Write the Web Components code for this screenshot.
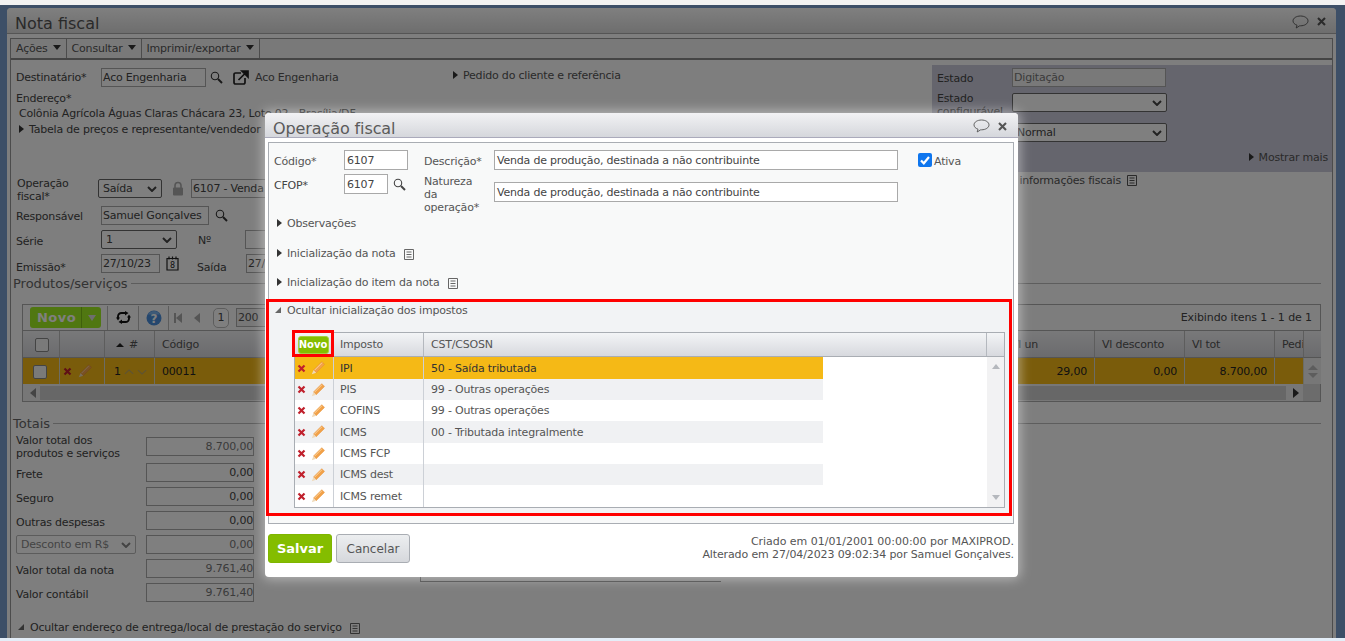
<!DOCTYPE html>
<html lang="pt-BR">
<head>
<meta charset="utf-8">
<title>Nota fiscal</title>
<style>
  html, body { margin: 0; height: 100%; }
  body { width: 1345px; height: 641px; overflow: hidden; background: #fff; font: 11px/13px "DejaVu Sans", Verdana, sans-serif; letter-spacing: -.2px; color: #444; }
</style>
</head>
<body>
<nf-desktop>
  <nf-invoice></nf-invoice>
  <nf-modal slot="modal" heading="Operação fiscal">
    <nf-fiscal-form></nf-fiscal-form>
    <nf-tax-section></nf-tax-section>
    <nf-modal-footer slot="footer"></nf-modal-footer>
  </nf-modal>
</nf-desktop>

<script>
// icons used all over the page
const ICONS = {
  search: `<svg width="13" height="13" viewBox="0 0 13 13"><circle cx="5" cy="5" r="3.7" fill="none" stroke="currentColor" stroke-width="1.1"/><path d="M8 8l4 4" stroke="currentColor" stroke-width="2"/></svg>`,
  external: `<svg width="16" height="15" viewBox="0 0 16 15"><path d="M8 3H2.500A1.500 1.500 0 0 0 1 4.500v8A1.500 1.500 0 0 0 2.500 14h8a1.500 1.500 0 0 0 1.500-1.500V8" fill="none" stroke="currentColor" stroke-width="1.700"/><path d="M5.500 10L13 2.500M9 1h6v6z" fill="currentColor" stroke="currentColor" stroke-width="1.700"/></svg>`,
  lock: `<svg width="12" height="15" viewBox="0 0 12 15"><path d="M3 7V4.500a3 3 0 0 1 6 0V7" fill="none" stroke="currentColor" stroke-width="1.600"/><rect x="1" y="6.500" width="10" height="8" rx="1" fill="currentColor"/></svg>`,
  doc: `<svg width="10" height="11" viewBox="0 0 10 11"><path d="M.5.500h9v10h-9zM2.500 3h5M2.500 5.500h5M2.500 8h5" fill="none" stroke="currentColor"/></svg>`,
  pencil: `<svg width="14" height="14" viewBox="0 0 14 14"><path d="M2.500 9L10.800.7l2.700 2.700-8.300 8.300z" fill="#f2a24a" stroke="#e58a2c" stroke-width=".5"/><path d="M2.500 9l2.700 2.700-4.400 1.600z" fill="#efd9b8"/><path d="M3.500 9.200L11 1.700" stroke="#fbd29c"/></svg>`,
  remove: `<svg width="9" height="9" viewBox="0 0 9 9"><path d="M1.500 1.500l6 6M7.500 1.500l-6 6" stroke="#c0202c" stroke-width="2.200"/></svg>`,
  bubble: `<svg width="17" height="14" viewBox="0 0 17 14"><path d="M8.500 1C4.400 1 1 3.100 1 5.900c0 2 1.700 3.500 4 4.300L4.200 13l3.500-2.200h.8c4.100 0 7.500-2.100 7.500-4.900S12.600 1 8.500 1z" fill="none" stroke="currentColor" stroke-width=".9"/></svg>`,
  close: `<svg width="9" height="9" viewBox="0 0 9 9"><path d="M1 1l7 7M8 1L1 8" stroke="currentColor" stroke-width="2.100"/></svg>`,
  calendar: `<svg width="13" height="15" viewBox="0 0 13 15"><path d="M1 2.500h11v11.500H1z" fill="none" stroke="currentColor" stroke-width="1.200"/><path d="M3 .5v3M6.500 .5v3M10 .5v3" stroke="currentColor" stroke-width="1.200"/><text x="6.500" y="12" font-size="8" text-anchor="middle" fill="currentColor" font-family="DejaVu Sans">8</text></svg>`,
  refresh: `<svg width="15" height="13" viewBox="0 0 15 13"><path d="M2 7V5.500C2 3.500 3.500 2 5.500 2H10M13 6v1.500c0 2-1.500 3.500-3.500 3.500H5" fill="none" stroke="currentColor" stroke-width="1.900"/><path d="M9 0l3.500 2L9 4.500zM6 8.500L2.500 11 6 13zM0 6.500h4L2 9.500zM11 6.500h4L13 3.500z" fill="currentColor"/></svg>`,
  help: `<svg width="16" height="16" viewBox="0 0 16 16"><circle cx="8" cy="8" r="7.500" fill="#4a8fdc"/><path d="M8 1a7 7 0 0 1 6 3.500H2A7 7 0 0 1 8 1z" fill="#7db4ee"/><text x="8" y="12.500" font-size="12" font-weight="700" text-anchor="middle" fill="#fff" font-family="DejaVu Sans">?</text></svg>`,
};

function define(name, html) {
  customElements.define(name, class extends HTMLElement {
    constructor() {
      super();
      this.attachShadow({ mode: "open" }).innerHTML = html;
    }
  });
}

// small bits ---------------------------------------------------------
class NfIcon extends HTMLElement {
  constructor() { super(); this.attachShadow({ mode: "open" }); }
  connectedCallback() {
    this.shadowRoot.innerHTML = `<style>:host{display:inline-flex;flex:none;line-height:0}</style>${ICONS[this.getAttribute("name")] || ""}`;
  }
}
customElements.define("nf-icon", NfIcon);

define("nf-input", `<style>
  :host { display: inline-block; box-sizing: border-box; height: 19px; padding: 1px 1px; border: 1px solid #aaa; background: #fff; color: #444; white-space: nowrap; overflow: hidden; line-height: 15px; flex: none; }
  :host([ro]) { background: #f2f2f2; color: #777; }
  :host([num]) { text-align: right; padding-right: 0; }
</style><slot></slot>`);

define("nf-select", `<style>
  :host { display: inline-flex; align-items: center; box-sizing: border-box; height: 19px; padding: 0 4px; border: 1px solid #666; border-radius: 2px; background: #fff; color: #444; white-space: nowrap; flex: none; }
  :host([off]) { border-color: #b8b8b8; color: #888; }
  svg { flex: none; margin-left: auto; }
</style><slot></slot><svg width="10" height="6" viewBox="0 0 10 6"><path d="M1 1l4 4 4-4" fill="none" stroke="currentColor" stroke-width="2"/></svg>`);

define("nf-expander", `<style>
  :host { display: flex; align-items: center; height: 14px; gap: 5px; white-space: nowrap; color: inherit; }
  i { width: 0; height: 0; border-style: solid; border-width: 4px 0 4px 5px; border-color: transparent transparent transparent #333; flex: none; }
  :host([open]) i { border-width: 0 0 6px 6px; border-color: transparent transparent #666 transparent; margin-right: 1px; }
  ::slotted(nf-icon) { margin-left: 3px; margin-top: 3px; color: #666; }
</style><i></i><slot></slot>`);

define("nf-menu-button", `<style>
  :host { display: flex; align-items: center; gap: 5px; padding: 0 5px; border-right: 1px solid #999; height: 100%; color: #555; white-space: nowrap; }
  i { width: 0; height: 0; border-style: solid; border-width: 5px 4.500px 0; border-color: #333 transparent transparent; margin-top: -2px; }
</style><slot></slot><i></i>`);

define("nf-money-row", `<style>
  :host { display: flex; align-items: flex-start; height: 24px; }
  :host([two]) { height: 26px; }
  .l { width: 130px; flex: none; padding-top: 5px; }
  :host([two]) .l { padding-top: 0; margin-top: -3px; }
  :host([sel]) .l { padding-top: 0; }
  nf-input { width: 108px; height: 19px; }
  ::slotted(nf-select) { width: 120px; margin-right: 10px; }
</style><div class="l"><slot></slot></div><nf-input num><slot name="v"></slot></nf-input>`);

// background form ----------------------------------------------------
define("nf-top-form", `<style>
  :host { display: block; font-size: 11px; }
  .a { display: flex; height: 107px; margin-top: 5px; }
  .left { width: 437px; padding-left: 5px; flex: none; }
  .mid { flex: 1; padding-top: 3px; }
  .state { width: 400px; background: #cbcbdb; padding: 3px 0 0 5px; box-sizing: border-box; flex: none; }
  .row { display: flex; align-items: center; }
  .lbl { width: 85px; flex: none; }
  .state .lbl { width: 75px; }
  .state .row { height: 19px; }
  .state .row + .row { margin-top: 6px; }
  .state .tall .lbl { height: 26px; margin-top: 5px; }
  .more { display: flex; justify-content: flex-end; padding-right: 4px; margin-top: 8px; color: #555; }
  .more2 { margin-left: auto; margin-right: 195px; display: flex; gap: 6px; align-items: center; color: #555; }
  .b { padding: 5px 0 0 5px; }
  .b .row { height: 19px; margin-top: 5px; }
  .b .row.first { margin-top: 0; height: 24px; align-items: flex-start; }
  .muted { color: #555; }
</style>
<div class="a">
  <div class="left">
    <div class="row" style="padding-top:3px">
      <div class="lbl">Destinatário*</div>
      <nf-input style="width:105px">Aco Engenharia</nf-input>
      <nf-icon name="search" style="margin-left:4px;color:#333"></nf-icon>
      <nf-icon name="external" style="margin-left:10px;color:#222"></nf-icon>
      <span class="muted" style="margin-left:6px">Aco Engenharia</span>
    </div>
    <div style="margin-top:5px">Endereço*</div>
    <div style="margin:2px 0 2px 3px;white-space:nowrap">Colônia Agrícola Águas Claras Chácara 23, Lote 02 - Brasília/DF</div>
    <nf-expander style="margin-left:3px">Tabela de preços e representante/vendedor</nf-expander>
  </div>
  <div class="mid"><nf-expander class="muted">Pedido do cliente e referência</nf-expander></div>
  <div class="state">
    <div class="row"><div class="lbl" style="padding-top:2px">Estado</div><nf-input ro style="width:154px">Digitação</nf-input></div>
    <div class="row tall"><div class="lbl">Estado configurável</div><nf-select style="width:155px"></nf-select></div>
    <div class="row" style="margin-top:11px"><div class="lbl">Tipo</div><nf-select style="width:155px">Normal</nf-select></div>
    <div class="more"><nf-expander>Mostrar mais</nf-expander></div>
  </div>
</div>
<div class="b">
  <div class="row first">
    <div style="width:81px;margin-left:1px;padding-top:0;flex:none">Operação<br>fiscal*</div>
    <nf-select style="width:64px;margin-top:2px">Saída</nf-select>
    <nf-icon name="lock" style="margin:4px 0 0 10px;color:#aaa"></nf-icon>
    <nf-input style="width:200px;margin:2px 0 0 7px">6107 - Venda</nf-input>
    <div class="more2" style="margin-top:-3px">informações fiscais <nf-icon name="doc"></nf-icon></div>
  </div>
  <div class="row"><div class="lbl" style="padding-top:2px">Responsável</div><nf-input style="width:108px">Samuel Gonçalves</nf-input><nf-icon name="search" style="margin-left:6px;color:#333"></nf-icon></div>
  <div class="row"><div class="lbl" style="padding-top:4px">Série</div><nf-select style="width:76px">1</nf-select><span style="margin:0 0 0 21px;width:47px;padding-top:2px">Nº</span><nf-input style="width:60px"></nf-input></div>
  <div class="row"><div class="lbl" style="padding-top:7px">Emissão*</div><nf-input style="width:59px">27/10/23</nf-input><nf-icon name="calendar" style="margin-left:6px;color:#222"></nf-icon><span style="margin-left:18px;width:49px;padding-top:7px">Saída</span><nf-input style="width:60px">27/10/23</nf-input></div>
</div>`);

define("nf-legend", `<style>
  :host { display: flex; align-items: center; gap: 3px; font-size: 13px; line-height: 15px; letter-spacing: 0; color: #666; white-space: nowrap; height: 15px; }
  i { flex: 1; height: 1px; background: #bbb; }
</style><slot></slot><i></i>`);

define("nf-products", `<style>
  :host { display: block; box-sizing: border-box; height: 98px; border: 1px solid #aaa; background: #f4f4f4; font-size: 11px; color: #444; }
  .bar { display: flex; align-items: center; box-sizing: border-box; height: 26px; border-bottom: 1px solid #aaa; background: #fafafa; }
  .novo { display: flex; width: 71px; height: 21px; margin: 0 6px 0 7px; background: #a0ee22; border-radius: 3px; color: #fff; font: 700 13px/21px "DejaVu Sans", sans-serif; letter-spacing: .5px; box-sizing: border-box; flex: none; }
  .novo b { flex: 1; text-align: center; padding-left: 2px; }
  .novo span { width: 19px; border-left: 1px solid #7fc016; display: flex; align-items: center; justify-content: center; }
  .novo span::after { content: ""; border-style: solid; border-width: 6px 4px 0; border-color: #ddd transparent transparent; }
  .sep { width: 1px; height: 24px; background: #bbb; flex: none; }
  .stop { width: 2px; height: 10px; background: #aaa; margin-left: 5px; }
  .tri { width: 0; height: 0; border-style: solid; border-width: 5px 6px 5px 0; border-color: transparent #aaa transparent transparent; }
  .pg { box-sizing: border-box; width: 16px; height: 20px; margin-left: 13px; border: 1px solid #bbb; border-radius: 5px; background: #fff; text-align: center; line-height: 18px; flex: none; }
  .info { margin-left: auto; padding-right: 8px; letter-spacing: -.1px; }
  .grid { display: grid; grid-template-columns: 37px 45px 50px 849px 91px 90px 90px 29px 17px; }
  .h, .c { box-sizing: border-box; border-right: 1px solid #bbb; padding: 1px 7px 0; display: flex; align-items: center; white-space: nowrap; overflow: hidden; }
  .h { height: 27px; background: linear-gradient(#f2f2f4, #d6d7db); border-bottom: 1px solid #aaa; color: #555; }
  .c { height: 26px; background: #f5b916; border-right-color: #d8d8c8; color: #222; }
  .n { justify-content: flex-end; }
  .box { width: 14px; height: 14px; border: 1px solid #888; border-radius: 2px; background: #f4f4f4; flex: none; box-sizing: border-box; margin-left: 5px; }
  .c .box { margin-left: 3px; }
  .end { border-right: 0; padding: 0; background: #eee; flex-direction: column; justify-content: center; gap: 3px; }
  .end i { border-style: solid; border-color: transparent; border-width: 0 5px 5px; border-bottom-color: #bbb; }
  .end i + i { border-width: 5px 5px 0; border-top-color: #bbb; border-bottom-color: transparent; }
  .scroll { display: flex; align-items: center; height: 17px; padding-left: 7px; background: #eee; }
  .scroll .track { margin-left: 4px; width: 1246px; height: 14px; background: #cfcfcf; flex: none; }
  .scroll .r { margin-left: 7px; border-style: solid; border-width: 5px 0 5px 6px; border-color: transparent transparent transparent #333; }
  .scroll .corner { margin-left: auto; width: 17px; height: 17px; background: #d8d8d8; }
</style>
<div class="bar">
  <div class="novo"><b>Novo</b><span></span></div>
  <div class="sep"></div>
  <nf-icon name="refresh" style="margin:0 7px 0 8px;color:#111"></nf-icon>
  <div class="sep"></div>
  <nf-icon name="help" style="margin:0 6px 0 7px"></nf-icon>
  <div class="sep"></div>
  <div class="stop"></div><div class="tri"></div>
  <div class="tri" style="margin-left:12px"></div>
  <div class="pg">1</div>
  <nf-input style="width:50px;margin-left:7px;background:#eee;color:#555;border-color:#aaa">200</nf-input>
  <div class="info">Exibindo itens 1 - 1 de 1</div>
</div>
<div class="grid">
  <div class="h"><span class="box"></span></div><div class="h"></div>
  <div class="h" style="gap:5px;padding-left:11px"><span style="border-style:solid;border-width:0 4.500px 4px;border-color:transparent transparent #222"></span>#</div>
  <div class="h">Código</div><div class="h">Vl un</div><div class="h">Vl desconto</div><div class="h">Vl tot</div><div class="h" style="padding-right:0">Pedi</div><div class="h" style="border-right:0"></div>
  <div class="c"><span class="box"></span></div>
  <div class="c" style="padding:0 3px;gap:6px"><nf-icon name="remove"></nf-icon><nf-icon name="pencil"></nf-icon></div>
  <div class="c" style="padding-left:9px;gap:3px">1 <svg width="11" height="6" viewBox="0 0 11 6"><path d="M1 5l4.500-4 4.500 4" fill="none" stroke="#bda766" stroke-width="1.300"/></svg><svg width="11" height="6" viewBox="0 0 11 6"><path d="M1 1l4.500 4 4.500-4" fill="none" stroke="#bda766" stroke-width="1.300"/></svg></div>
  <div class="c">00011</div><div class="c n">29,00</div><div class="c n">0,00</div><div class="c n">8.700,00</div><div class="c"></div>
  <div class="c end"><i></i><i></i></div>
</div>
<div class="scroll"><div class="tri" style="border-right-color:#888"></div><div class="track"></div><div class="r"></div><div class="corner"></div></div>`);

define("nf-totals", `<style>
  :host { display: block; font-size: 11px; }
  .wrap { display: flex; margin-top: 6px; }
  .col { width: 240px; padding-left: 3px; flex: none; }
  .side { width: 300px; height: 144px; margin-left: 164px; border-bottom: 1px solid #888; border-left: 1px solid #888; box-sizing: content-box; }
</style>
<nf-legend>Totais</nf-legend>
<div class="wrap">
  <div class="col">
    <nf-money-row two>Valor total dos<br>produtos e serviços<span slot="v" style="color:#777">8.700,00</span></nf-money-row>
    <nf-money-row>Frete<span slot="v">0,00</span></nf-money-row>
    <nf-money-row>Seguro<span slot="v">0,00</span></nf-money-row>
    <nf-money-row>Outras despesas<span slot="v">0,00</span></nf-money-row>
    <nf-money-row sel><nf-select off>Desconto em R$</nf-select><span slot="v" style="color:#777">0,00</span></nf-money-row>
    <nf-money-row>Valor total da nota<span slot="v" style="color:#777">9.761,40</span></nf-money-row>
    <nf-money-row>Valor contábil<span slot="v" style="color:#777">9.761,40</span></nf-money-row>
  </div>
  <div class="side"></div>
</div>`);

define("nf-invoice", `<style>
  :host { display: block; box-sizing: border-box; height: 630px; margin: 0 9px 0 7px; background: #fcfcfc; border-radius: 4px 4px 0 0; overflow: hidden; }
  header { display: flex; align-items: center; justify-content: space-between; height: 26px; box-sizing: border-box; padding: 0 10px 0 8px; background: linear-gradient(#fff, #dcdcdc); border-bottom: 1px solid #aaa; font-size: 16px; letter-spacing: 0; color: #555; }
  header span { padding-top: 6px; }
  header div { display: flex; gap: 6px; align-items: center; color: #555; padding-top: 2px; }
  .panel { margin: 4px 3px 0 3px; border: 1px solid #999; border-bottom: 0; height: 600px; box-sizing: border-box; }
  .menu { display: flex; height: 21px; box-sizing: border-box; border-bottom: 2px solid #888; background: #f3f3f3; }
  .section { padding: 3px 11px 0 2px; }
  .tbl { margin: 13px 0 0 9px; }
  .bottom { margin: 13px 0 0 5px; color: #444; }
</style>
<header><span>Nota fiscal</span><div><nf-icon name="bubble"></nf-icon><nf-icon name="close" style="margin-left:2px"></nf-icon></div></header>
<div class="panel">
  <div class="menu"><nf-menu-button>Ações</nf-menu-button><nf-menu-button>Consultar</nf-menu-button><nf-menu-button>Imprimir/exportar</nf-menu-button></div>
  <nf-top-form></nf-top-form>
  <div class="section">
    <nf-legend>Produtos/serviços</nf-legend>
    <nf-products class="tbl"></nf-products>
    <nf-totals style="margin-top:14px"></nf-totals>
    <nf-expander open class="bottom">Ocultar endereço de entrega/local de prestação do serviço <nf-icon name="doc"></nf-icon></nf-expander>
  </div>
</div>`);

// dialog -------------------------------------------------------------
define("nf-check", `<style>
  :host { display: inline-flex; width: 14px; height: 14px; border-radius: 2px; background: #0f76ee; align-items: center; justify-content: center; flex: none; }
</style><svg width="12" height="12" viewBox="0 0 12 12"><path d="M2 6.500l2.800 2.800L10 3" fill="none" stroke="#fff" stroke-width="2.200"/></svg>`);

define("nf-fiscal-form", `<style>
  :host { display: block; padding: 7px 0 0 5px; color: #555; }
  .g { display: grid; grid-template-columns: 70px 80px 70px 404px 20px auto; grid-template-rows: 20px 40px; row-gap: 4px; align-items: center; }
  .t { padding-top: 2px; }
  nf-input { height: 20px; border-color: #a9a9a9; padding: 2px 2px 0; line-height: 16px; }
  .top { align-self: start; }
  .cfop { color: #444; align-self: start; padding-top: 5px; }
  .ex { margin-left: 3px; }
</style>
<div class="g">
  <div class="t">Código*</div><nf-input style="width:64px">6107</nf-input>
  <div class="t">Descrição*</div><nf-input style="width:404px">Venda de produção, destinada a não contribuinte</nf-input>
  <div></div><div class="t" style="display:flex;align-items:center;gap:2px"><nf-check style="margin-top:-2px"></nf-check>Ativa</div>
  <div class="cfop">CFOP*</div>
  <div class="top" style="display:flex;gap:5px;align-items:center"><nf-input style="width:44px">6107</nf-input><nf-icon name="search" style="color:#444"></nf-icon></div>
  <div class="top" style="padding-top:1px">Natureza<br>da<br>operação*</div>
  <nf-input class="top" style="width:404px;margin-top:8px">Venda de produção, destinada a não contribuinte</nf-input>
</div>
<nf-expander class="ex" style="margin-top:2px">Observações</nf-expander>
<nf-expander class="ex" style="margin-top:16px">Inicialização da nota <nf-icon name="doc"></nf-icon></nf-expander>
<nf-expander class="ex" style="margin-top:15px">Inicialização do item da nota <nf-icon name="doc"></nf-icon></nf-expander>`);

define("nf-tax-row", `<style>
  :host { display: grid; grid-template-columns: 39px 90px 1fr; width: 528px; background: #fff; color: #555; }
  :host([alt]) { background: #f0f1f3; }
  :host([sel]) { background: #f5b916; color: #333; }
  div { display: flex; align-items: center; padding-left: 6px; white-space: nowrap; }
  .a { padding-left: 2px; gap: 5px; border-right: 1px solid #ccd0d6; }
  .b { border-right: 1px solid #ccd0d6; }
  .c { padding-left: 7px; }
</style><div class="a"><nf-icon name="remove"></nf-icon><nf-icon name="pencil"></nf-icon></div><div class="b"><slot></slot></div><div class="c"><slot name="cst"></slot></div>`);

define("nf-tax-grid", `<style>
  :host { display: block; border: 1px solid #a9adb3; background: #fff; color: #555; }
  .head { display: grid; grid-template-columns: 39px 90px 1fr 17px; height: 24px; background: linear-gradient(#f3f4f6, #d7d9de); border-bottom: 1px solid #a9adb3; box-sizing: border-box; }
  .head > div { display: flex; align-items: center; padding-left: 6px; border-right: 1px solid #b4b8be; position: relative; }
  .head > div:first-child { padding: 0; justify-content: center; }
  .head > div:last-child { border: 0; padding: 0; }
  .novo { width: 31px; height: 18px; margin-left: -2px; border-radius: 3px; background: #84bd00; border: 1px solid #a5d03f; box-sizing: border-box; color: #fff; font: 700 10px/16px "DejaVu Sans", sans-serif; text-align: center; letter-spacing: 0; }
  .mark { position: absolute; left: -3px; top: -3px; right: -1px; bottom: -1px; border: 3px solid #f00; pointer-events: none; }
  .body { display: flex; height: 150px; }
  .rows { flex: 1; display: grid; grid-template-rows: 22px 21px 21px 22px 21px 21px 22px; }
  .bar { width: 17px; background: #f2f2f3; display: flex; flex-direction: column; justify-content: space-between; align-items: center; padding: 7px 0; box-sizing: border-box; }
  .bar i { border-style: solid; border-color: transparent; border-width: 0 4px 5px; border-bottom-color: #b5b8bd; }
  .bar i + i { border-width: 5px 4px 0; border-top-color: #b5b8bd; border-bottom-color: transparent; }
</style>
<div class="head">
  <div><div class="novo">Novo</div><div class="mark"></div></div>
  <div>Imposto</div><div style="padding-left:7px">CST/CSOSN</div><div></div>
</div>
<div class="body">
  <div class="rows">
    <nf-tax-row sel>IPI<span slot="cst">50 - Saída tributada</span></nf-tax-row>
    <nf-tax-row alt>PIS<span slot="cst">99 - Outras operações</span></nf-tax-row>
    <nf-tax-row>COFINS<span slot="cst">99 - Outras operações</span></nf-tax-row>
    <nf-tax-row alt>ICMS<span slot="cst">00 - Tributada integralmente</span></nf-tax-row>
    <nf-tax-row>ICMS FCP</nf-tax-row>
    <nf-tax-row alt>ICMS dest</nf-tax-row>
    <nf-tax-row>ICMS remet</nf-tax-row>
  </div>
  <div class="bar"><i></i><i></i></div>
</div>`);

define("nf-tax-section", `<style>
  :host { display: block; margin: 10px 1px 8px -3px; border: 3px solid #f00; background: #f2f3f5; padding-bottom: 5px; color: #555; }
  nf-expander { margin: 1px 0 0 6px; }
  nf-tax-grid { margin: 15px 4px 0 25px; }
</style><nf-expander open>Ocultar inicialização dos impostos</nf-expander><nf-tax-grid></nf-tax-grid>`);

define("nf-modal-footer", `<style>
  :host { display: flex; justify-content: space-between; align-items: flex-start; padding: 10px 0 0 0; color: #555; letter-spacing: -.12px; }
  .btns { display: flex; gap: 4px; }
  button { height: 29px; border-radius: 3px; font-family: "DejaVu Sans", sans-serif; padding: 0; box-sizing: border-box; }
  .save { width: 64px; background: #84bd00; border: 1px solid #7fb500; color: #fff; font-size: 13px; font-weight: 700; }
  .cancel { width: 74px; background: linear-gradient(#eceef0, #d6d8dc); border: 1px solid #a9adb3; color: #555; font-size: 12px; }
  .who { text-align: right; padding-top: 1px; }
  .who span { letter-spacing: -.03px; }
</style>
<div class="btns"><button class="save">Salvar</button><button class="cancel">Cancelar</button></div>
<div class="who"><span>Criado em 01/01/2001 00:00:00 por MAXIPROD.</span><br>Alterado em 27/04/2023 09:02:34 por Samuel Gonçalves.</div>`);

class NfModal extends HTMLElement {
  constructor() {
    super();
    this.attachShadow({ mode: "open" }).innerHTML = `<style>
      :host { position: absolute; left: 265px; top: 108px; width: 753px; height: 464px; box-sizing: border-box; background: #fff; border-radius: 4px; box-shadow: 0 0 12px 2px rgba(255,255,255,.45); font-size: 11px; }
      header { display: flex; align-items: center; justify-content: space-between; height: 25px; padding: 2px 11px 0 8px; box-sizing: border-box; background: linear-gradient(#f2f2f4, #d5d7dc); border-bottom: 1px solid #aab; border-radius: 4px 4px 0 0; font-size: 16px; letter-spacing: -.1px; color: #5a5a5a; }
      header span { padding-top: 4px; }
      header div { display: flex; align-items: center; gap: 8px; color: #555; }
      .panel { margin: 4px 4px 0 3px; border: 1px solid #a9adb3; background: #f8f9f9; box-sizing: border-box; height: 382px; }
      .foot { margin: 0 4px 0 3px; }
    </style>
    <header><span id="t"></span><div><nf-icon name="bubble"></nf-icon><nf-icon name="close"></nf-icon></div></header>
    <div class="panel"><slot></slot></div>
    <div class="foot"><slot name="footer"></slot></div>`;
  }
  connectedCallback() {
    this.shadowRoot.getElementById("t").textContent = this.getAttribute("heading");
  }
}
customElements.define("nf-modal", NfModal);

define("nf-desktop", `<style>
  :host { display: flex; flex-direction: column; height: 641px; }
  .top { height: 5px; background: #f2f2f2; flex: none; }
  .stage { position: relative; height: 633px; flex: none; background: #7a9fcf; padding-top: 3px; box-sizing: border-box; overflow: hidden; }
  .mask { position: absolute; inset: 0; background: rgba(0,0,0,.5); }
  .bottom { height: 3px; background: #e4eef8; flex: none; }
</style>
<div class="top"></div>
<div class="stage"><slot></slot><div class="mask"></div><slot name="modal"></slot></div>
<div class="bottom"></div>`);
</script>
</body>
</html>
